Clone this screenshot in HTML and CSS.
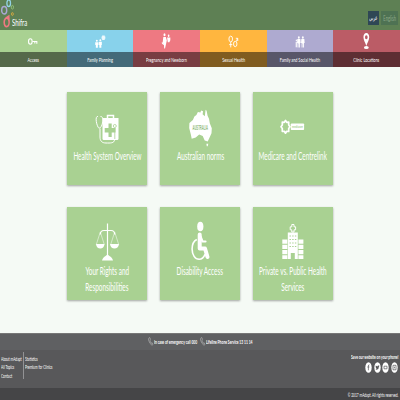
FILE: index.html
```html
<!DOCTYPE html>
<html lang="en">
<head>
<meta charset="utf-8">
<title>Shifra</title>
<link rel="stylesheet" href="styles.css">
</head>
<body>
<header class="top">
  <div class="brand">
    <svg class="logo" width="16" height="30" viewBox="0 0 16 30" fill="none">
      <ellipse cx="8.7" cy="3.2" rx="1.8" ry="3.3" stroke="#93d4e6" stroke-width="1.3"/>
      <ellipse cx="4.2" cy="10.3" rx="2.5" ry="3.7" stroke="#aaa8d4" stroke-width="1.5"/>
      <ellipse cx="12.4" cy="7.2" rx="1.1" ry="1.9" stroke="#9ac97e" stroke-width=".8"/>
      <ellipse cx="12.4" cy="14" rx=".9" ry="1.5" stroke="#d6a83e" stroke-width=".9"/>
      <path fill="#ee7982" fill-rule="evenodd" d="M9.5 14.8C6 16.6 3.4 18.5 3.4 22.4c0 3 1.4 5.1 3.3 5.1s3.2-2.2 3.2-5.2c0-2.4-.5-4.7-.4-7.5ZM6.7 19c1 0 1.7 1.5 1.7 3.4s-.7 3.3-1.7 3.3-1.7-1.4-1.7-3.3S5.700 19 6.700 19Z"/>
    </svg>
    <span class="name">Shifra</span>
  </div>
  <div class="langs">
    <a class="lang active"><span>عربي</span></a>
    <a class="lang"><span>English</span></a>
  </div>
</header>
<nav class="nav">
  <a class="tab green">
    <svg class="glyph" viewBox="0 0 66 22" fill="none" stroke="#fff"><ellipse cx="30" cy="11.500" rx="1.800" ry="2.700" stroke-width="1.100"/><path d="M32 11.500h5M34.500 11.500v2M36.500 11.500v2.200" stroke-width="1.100"/></svg>
    <span class="label"><span>Access</span></span>
  </a>
  <a class="tab blue">
    <svg class="glyph" viewBox="0 0 66 22" fill="#fff"><circle cx="29.500" cy="10.800" r="1"/><path d="M27.900 12.300h3.200v2.700h-.6v2.700h-2V15h-.6z"/><circle cx="33" cy="10.300" r="1"/><path d="M31.500 11.800h3v3.200h-.5v2.700h-2V15h-.5z"/><path d="M34.800 5.500h2.600v4.500h-2.600zM34.200 6.500h3.800v2.300h-3.800z" opacity=".85"/></svg>
    <span class="label"><span>Family Planning</span></span>
  </a>
  <a class="tab pink">
    <svg class="glyph" viewBox="0 0 66 22" fill="#fff"><ellipse cx="31.200" cy="4.800" rx="1" ry="1.500"/><path d="M30 7h2.500l1 3.500-.8 3.500-1 4.500h-.8L30.500 14l-1.300-.5z"/><ellipse cx="35.300" cy="5.800" rx=".8" ry="1.200"/><path d="M33.700 7.500h3.300v2.700l-1 2h-1.500zM28.800 12l2 2.500-.8.500-1.700-2z"/></svg>
    <span class="label"><span>Pregnancy and Newborn</span></span>
  </a>
  <a class="tab orange">
    <svg class="glyph" viewBox="0 0 66 22" fill="none" stroke="#fff" stroke-width=".9"><ellipse cx="30.400" cy="9" rx="1.800" ry="2.900"/><path d="M30.400 11.900v5.500M28.800 14.600h3.200"/><ellipse cx="34.900" cy="14" rx="1.700" ry="2.700"/><path d="m35.900 11.600 1.400-3.300M35.500 8.300h1.900V11"/></svg>
    <span class="label"><span>Sexual Health</span></span>
  </a>
  <a class="tab purple">
    <svg class="glyph" viewBox="0 0 66 22" fill="#fff"><ellipse cx="31.500" cy="7.500" rx=".9" ry="1.200"/><path d="M30 9h3l.3 4h-.6v4.500h-.9V13.500h-.6v4h-.9V13h-.6z"/><ellipse cx="35.500" cy="7.500" rx=".9" ry="1.200"/><path d="M34 9h3l.3 4h-.6v4.500h-.9V13.500h-.6v4h-.9V13h-.6z"/><ellipse cx="29" cy="10.500" rx=".6" ry=".9"/><path d="M28.300 12h1.500v5.300h-1.500z" opacity=".8"/></svg>
    <span class="label"><span>Family and Social Health</span></span>
  </a>
  <a class="tab red">
    <svg class="glyph" viewBox="0 0 66 22"><path fill="#fff" fill-rule="evenodd" d="M33 3c1.800 0 2.900 1.700 2.900 4.200 0 2.800-1.900 5.300-2.900 8.800-1-3.500-2.900-6-2.900-8.800C30.100 4.700 31.200 3 33 3Zm0 2.200c-.8 0-1.300.8-1.300 2s.5 2 1.300 2 1.300-.8 1.300-2-.5-2-1.300-2Z"/><ellipse cx="33" cy="17.500" rx="2.400" ry="1.500" fill="#fff"/></svg>
    <span class="label"><span>Clinic Locations</span></span>
  </a>
</nav>
<main class="cards">
  <a class="card">
    <svg class="art" viewBox="0 0 80 56" fill="none">
      <path d="M35.500 26h16v20.500q0 1.500-1.200 1.500H36.700q-1.200 0-1.200-1.500z" fill="#fff"/>
      <path d="M40.500 26v-2.500h6V26" stroke="#fff" stroke-width="1.500"/>
      <path d="M41.500 31.500h3.200V36h3.800v4.500h-3.800V45h-3.200v-4.500h-3.800V36h3.800z" fill="#a9d192"/>
      <path d="M31 24.500c-3-.8-2 7 .3 11 1.500 1.800 3.500-1 4.200-4.500.6-3.500.5-6.700-2-6.500M33 36.500v8.500c0 4 2 6 6 6s8.500.5 8.500-3.500" stroke="#fff" stroke-width="1"/>
      <path d="M47.800 47V36" stroke="#a9d192" stroke-width=".8"/><circle cx="47.800" cy="34" r="1.500" stroke="#a9d192" stroke-width=".8"/>
    </svg>
    <span class="title"><span class="t1">Health System Overview</span></span>
  </a>
  <a class="card">
    <svg class="art" viewBox="0 0 80 56"><path fill="#fff" d="m29.200 36 .2-5 3.500-3 1.500-3.500 2-1.500 1.500-3 2.500.5.700-2 2 .8-.5 3 2.200 2 .8-6.500 1 1 1 5 1.400 3 .8 4.500 2 5-.3 5-2.500 5.500-1.300 2.700-3-1-2-4.500-3.500-1.500-3.500 3-4 1.300-.8-4z"/><path d="M46.400 51.800h1.900l-.6 2.500h-.9z" fill="#fff"/><text class="aus" x="32.500" y="38" textLength="15.500" lengthAdjust="spacingAndGlyphs">AUSTRALIA</text></svg>
    <span class="title"><span class="t2">Australian norms</span></span>
  </a>
  <a class="card">
    <svg class="art" viewBox="0 0 80 56"><path d="m32.500 28.400 1.200 1.900 2-.2v3l1.300 1.700-1.300 1.700v3l-2-.2-1.200 1.900-1.200-1.900-2 .2v-3L28 34.800l1.300-1.700v-3l2 .2z" fill="none" stroke="#fff" stroke-width="1.700" stroke-linejoin="round"/><rect x="37.800" y="31.500" width="13.300" height="6.500" rx=".8" fill="#fff"/><text class="med" x="39" y="36" textLength="11" lengthAdjust="spacingAndGlyphs">medicare</text></svg>
    <span class="title"><span class="t3">Medicare and Centrelink</span></span>
  </a>
  <a class="card">
    <svg class="art" viewBox="0 0 80 56" fill="none"><path d="M40.500 16.500V49M33.300 27.500c0-3 1.500-4 3.700-4h7c2.200 0 3.700 1 3.700 4" stroke="#fff" stroke-width="1.200"/><path d="m33.300 25-4 12.500M33.300 25l4 12.500M47.700 25l-4 12.500M47.700 25l4 12.500" stroke="#fff" stroke-width=".5"/><path d="M29 37h8.500c-.3 3-2 4.500-4.200 4.500S29.300 40 29 37Zm14 0h9c-.3 3-2.300 4.500-4.500 4.500S43.300 40 43 37ZM35 53.500c.5-2.500 2-3.500 3.500-4.500l2-1.500 2 1.500c1.500 1 3 2 3.500 4.500z" fill="#fff"/></svg>
    <span class="title"><span class="t4">Your Rights and</span><span class="t5">Responsibilities</span></span>
  </a>
  <a class="card">
    <svg class="art" viewBox="0 0 80 56" fill="none"><ellipse cx="40.300" cy="19.500" rx="3.100" ry="4.700" fill="#fff"/><path d="M39.700 27.500v14h5.300l2.500 8.500" stroke="#fff" stroke-width="4" stroke-linejoin="round" stroke-linecap="round"/><path d="m40.500 29.500 2 5h3" stroke="#fff" stroke-width="2.200" stroke-linecap="round"/><path d="M36.800 32.500c-3 1.500-4.700 5-4.700 9.500 0 6 3 10.200 7 10.200 2.700 0 4.800-2 5.900-5" stroke="#fff" stroke-width="1.600"/></svg>
    <span class="title"><span class="t6">Disability Access</span></span>
  </a>
  <a class="card">
    <svg class="art" viewBox="0 0 80 56"><path fill="#fff" d="M34.800 25.500h10V52h-3v-6h-4v6h-3zM29.300 32.500h5v4.300h-5zm0 5.300h5v4.200h-5zm0 5.200h5v4.200h-5zm0 5.200h5V52h-5zM45.400 32.500h5v4.300h-5zm0 5.300h5v4.200h-5zm0 5.200h5v4.200h-5zm0 5.200h5V52h-5z"/><path d="M38.800 17.500h2.200v2.300h1.600v3H41V25h-2.200v-2.200h-1.600v-3h1.600z" fill="none" stroke="#fff" stroke-width="1"/><path d="M36.500 29h7M36.500 32.500h7M36.500 36h7M36.500 39.500h7" stroke="#a9d192" stroke-width="1.200" stroke-dasharray="1.400 1.300"/></svg>
    <span class="title"><span class="t7">Private vs. Public Health</span><span class="t8">Services</span></span>
  </a>
</main>
<footer class="footer">
  <div class="calls">
    <svg class="phone" viewBox="0 0 6 9"><path d="M1 .8Q.3 1.500.7 3.500 1.800 7 4 8.300l1-.9-.9-1.700-.8.600Q2.200 5 1.900 3l.6-.7L1.800.6Z"/></svg><span class="call"><span>In case of emergency call 000</span></span>
    <svg class="phone" viewBox="0 0 6 9"><path d="M1 .8Q.3 1.500.7 3.500 1.800 7 4 8.300l1-.9-.9-1.700-.8.600Q2.200 5 1.900 3l.6-.7L1.800.6Z"/></svg><span class="call"><span>Lifeline Phone Service 13 11 14</span></span>
  </div>
  <div class="info">
    <ul class="links first"><li>About mAdapt</li><li>All Topics</li><li>Contact</li></ul>
    <ul class="links"><li>Statistics</li><li>Premium for Clinics</li></ul>
    <div class="social">
      <span class="save">Save our website on your phone!</span>
      <div class="icons">
        <svg viewBox="0 0 7 11"><ellipse cx="3.500" cy="5.500" rx="3.200" ry="5.300"/><path d="M4.400 2.800q-1-.2-1 1.200v4.300M2.400 5h2"/></svg>
        <svg viewBox="0 0 7 11"><ellipse cx="3.500" cy="5.500" rx="3.200" ry="5.300"/><path class="solid" d="m1.700 3.500 1.700 1q.4-1.500 1.300-1l.8.200-.6 1q0 2.800-2.200 3l-1.200-.4 1-.6-.8-1.500z"/></svg>
        <svg viewBox="0 0 7 11"><ellipse cx="3.500" cy="5.500" rx="3.200" ry="5.300"/><path d="M2 4.200h3v2.600H2z"/></svg>
        <svg viewBox="0 0 7 11"><ellipse cx="3.500" cy="5.500" rx="3.200" ry="5.300"/><path d="M2 3.300h3v4.500H2zM3.500 4.700v1.600"/></svg>
      </div>
    </div>
  </div>
  <div class="legal"><span>© 2017 mAdapt. All rights reserved.</span></div>
</footer>
</body>
</html>
```
FILE: styles.css
```css
* { box-sizing: border-box; }
body {
  margin: 0;
  width: 400px;
  height: 400px;
  overflow: hidden;
  display: flex;
  flex-direction: column;
  background: #f5faf5;
  font-family: Lato, "Liberation Sans", sans-serif;
  color: #fff;
}
span, li { white-space: nowrap; }

.top { height: 30px; background: #5e8054; display: flex; justify-content: space-between; }
.brand { display: flex; width: 60px; }
.logo { flex: none; }
.name { font-size: 9.5px; line-height: 12px; margin: 17px 0 0 -4.500px; transform: scaleX(.63); transform-origin: left; }
.langs { display: flex; gap: 2px; padding: 11px 2px 0 0; }
.lang { width: 17px; height: 14px; display: flex; align-items: center; justify-content: center; background: #4e7253; color: #8fa889; font-size: 7.500px; }
.lang span { transform: scaleX(.54); }
.lang.active { width: 11px; background: #2f4755; color: #fff; font-family: "DejaVu Sans", sans-serif; font-size: 6.500px; }
.lang.active span { transform: scaleX(.58); }

.nav { height: 37px; display: grid; grid-template-columns: repeat(6, 1fr); }
.tab { display: flex; flex-direction: column; min-width: 0; }
.glyph { display: block; width: 100%; height: 22px; }
.label { height: 15px; display: flex; align-items: center; justify-content: center; font-size: 6.200px; }
.label span { transform: scaleX(.61); }
.green { background: #a9d192; }
.green .label { background: #55694a; }
.blue { background: #88d2eb; }
.blue .label { background: #446a79; }
.pink { background: #ee7982; }
.pink .label { background: #783d42; }
.orange { background: #ffb63f; }
.orange .label { background: #805c20; }
.purple { background: #aeaad0; }
.purple .label { background: #585669; }
.red { background: #bb5c66; }
.red .label { background: #5e2e33; }

.cards { flex: none; height: 266px; padding: 25.300px 66.800px 0 67.200px; display: grid; grid-template-columns: repeat(3, 80.300px); grid-template-rows: 93px 93px; justify-content: space-between; row-gap: 22px; }
.card { background: #a9d192; box-shadow: 0 1px 2px rgba(0, 0, 0, .35); }
.art { display: block; width: 80px; height: 56px; }
.title { display: flex; flex-direction: column; align-items: center; font-size: 11.500px; line-height: 15.500px; }
.title span { transform: scaleX(.555); }
.title .t1 { transform: scaleX(.545); }
.aus { font: 700 7.500px "Liberation Sans", sans-serif; fill: #91ba7d; }
.med { font: 700 4px "Liberation Sans", sans-serif; fill: #a9d192; }

.footer { font-size: 6.200px; }
.calls { height: 17px; background: #5f6062; border-top: 1px solid #777; display: flex; align-items: center; padding: 0 0 2px 148px; font-weight: 700; }
.phone { width: 6px; height: 9px; fill: none; stroke: #bbb; stroke-width: .6; }
.call { width: 46px; }
.call span { display: inline-block; transform: scaleX(.535); transform-origin: left; }
.info { height: 38px; background: #58585a; display: flex; padding-top: 2px; }
.links { list-style: none; margin: 0; padding: 2.500px 0 0 1px; height: 27px; width: 60px; line-height: 8.900px; }
.links.first { width: 24px; border-right: 1px solid #929294; }
.links li { transform: scaleX(.52); transform-origin: left; width: 20px; }
.social { margin-left: auto; width: 120px; padding-right: 2px; display: flex; flex-direction: column; align-items: flex-end; }
.save { margin-top: 1px; line-height: 8px; font-weight: 700; transform: scaleX(.53); transform-origin: right; }
.icons { display: flex; gap: 1.700px; margin: 1px 0 0; }
.icons svg { width: 7px; height: 11px; fill: #fff; }
.icons path { fill: none; stroke: #58585a; stroke-width: .7; }
.icons .solid { fill: #58585a; stroke: none; }
.legal { height: 12px; background: #454547; display: flex; align-items: center; justify-content: flex-end; padding-right: 1.500px; }
.legal span { transform: scaleX(.52); transform-origin: right; }
```
